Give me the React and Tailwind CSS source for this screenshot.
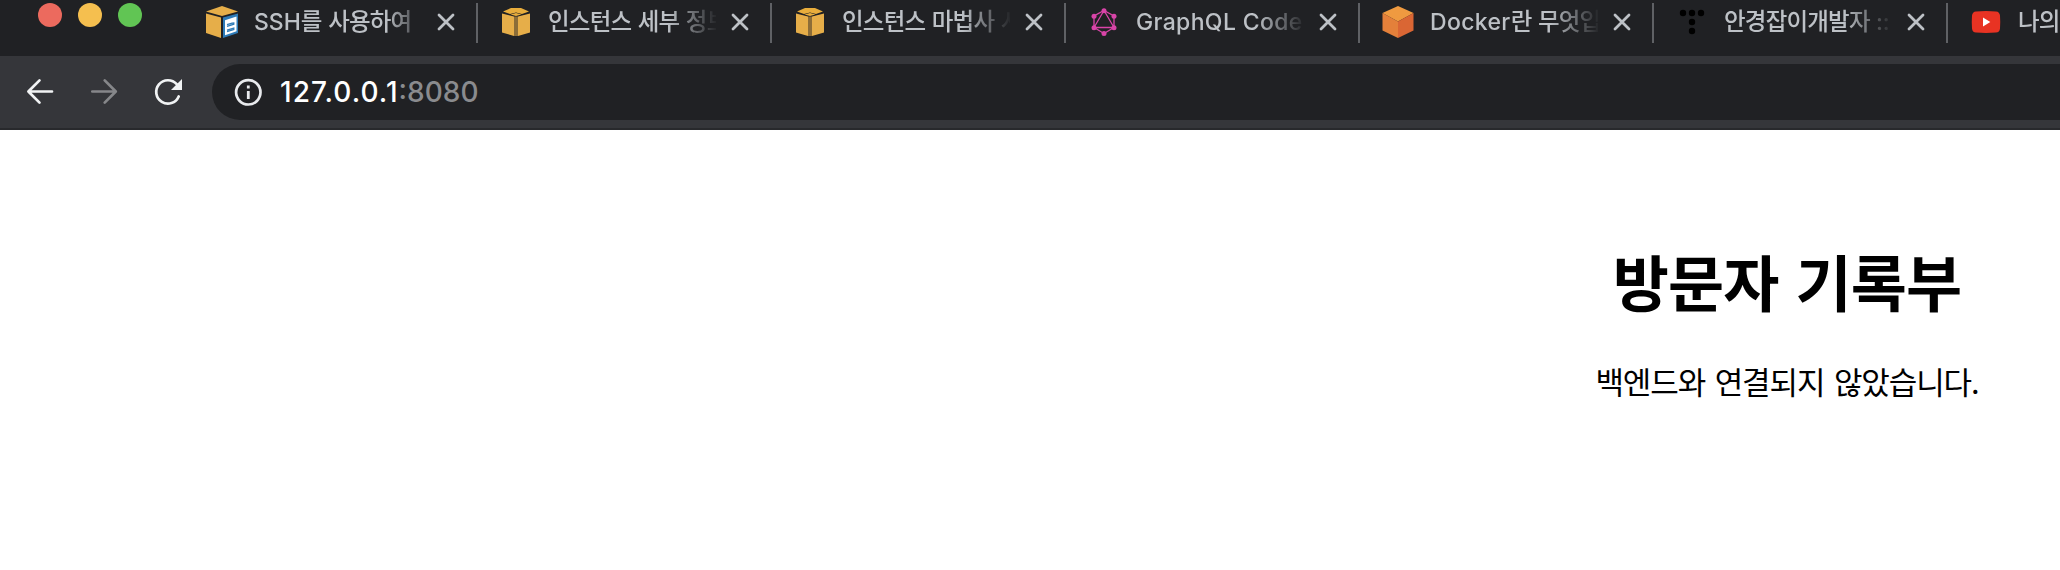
import React from "react";

const GRAY = "#bdc1c6";

function AwsDocIcon() {
  return (
    <svg viewBox="0 0 32 32" className="size-8">
      <path d="M0 5.500 16 0l16 5.500-16 4.500z" fill="#e6ae49" />
      <path d="M0 7.500 15 11.500V32L0 27z" fill="#e6ae49" />
      <path d="M17 11.500 32 7.500V27L17 32z" fill="#2f7cb8" />
      <path d="M19 14.200 30.500 10.500v14.800L19 29.200z" fill="#fff" />
      <path d="M21 18.600l5-1.500 1.800-.1v1.200L21 20.400M21 24.200l6.800-2v1.400L21 25.600" fill="none" stroke="#2f7cb8" strokeWidth="1.300" />
    </svg>
  );
}

function AwsBoxIcon() {
  return (
    <svg viewBox="0 0 32 32" className="size-8">
      <path d="M3 5.500 11 2h10l8 3.500-7 2.500-6-1.500-6 1.500z" fill="#e8ad3c" />
      <path d="M10.500 8.500 16 7l5.500 1.500L16 10z" fill="#e8ad3c" />
      <path d="M2 7.500l12 3v19.500L2 26.500z" fill="#e6ae49" />
      <path d="M30 7.500 18 10.500v19.500l12-3.500z" fill="#e6ae49" />
      <path d="M14 10.500h4V30h-4z" fill="#8c6d38" />
    </svg>
  );
}

function GraphqlIcon() {
  return (
    <svg viewBox="0 0 32 32" className="size-8" fill="#d944a8">
      <path d="M16 4.500 26 10v11.500L16 27.500 6 21.500V10zM16 4.500 6 21.500h20z" fill="none" stroke="#d944a8" strokeWidth="1.300" />
      <circle cx="16" cy="4.700" r="2.500" />
      <circle cx="26" cy="10.300" r="2.500" />
      <circle cx="26" cy="21.700" r="2.500" />
      <circle cx="16" cy="27.400" r="2.500" />
      <circle cx="6" cy="21.700" r="2.500" />
      <circle cx="6" cy="10.300" r="2.500" />
    </svg>
  );
}

function CubeIcon() {
  return (
    <svg viewBox="0 0 32 32" className="size-8">
      <path d="M16 0 31.500 7 16 15.500.5 7z" fill="#ef9a40" />
      <path d="M.5 7 16 15.500V32L.5 24.500z" fill="#e4803a" />
      <path d="M31.500 7 16 15.500V32l15.500-7.500z" fill="#da6634" />
    </svg>
  );
}

function DotsIcon() {
  return (
    <svg viewBox="0 0 32 32" className="size-8" fill="#000">
      <circle cx="7" cy="7" r="3.200" />
      <circle cx="16" cy="7" r="3.200" />
      <circle cx="25" cy="7" r="3.200" />
      <circle cx="16" cy="16" r="3.200" />
      <circle cx="16" cy="25" r="3.200" />
    </svg>
  );
}

function YoutubeIcon() {
  return (
    <svg viewBox="0 0 32 32" className="size-8">
      <path d="M6 5.400Q16 4.600 26 5.400 29.600 5.600 30 9.500q.5 6.500 0 13-.4 3.900-4 4.100-10 .8-20 0-3.600-.2-4-4.100-.5-6.500 0-13Q2.400 5.600 6 5.400z" fill="#e83323" />
      <path d="M13 11.500 20.300 16 13 20.500z" fill="#fff" />
    </svg>
  );
}

function Ko({ children }) {
  return <span className="text-[23.5px] tracking-[-0.8px] [word-spacing:1px]">{children}</span>;
}

const wideFade = "[mask-image:linear-gradient(to_right,#000_132px,transparent_172px)]";
const fade = "[mask-image:linear-gradient(to_right,#000_120px,transparent_170px)]";

const tabs = [
  { icon: <AwsDocIcon />, title: <>SSH<Ko>를 사용하여</Ko></>, mask: wideFade },
  { icon: <AwsBoxIcon />, title: <Ko>인스턴스 세부 정보</Ko>, mask: fade },
  { icon: <AwsBoxIcon />, title: <Ko>인스턴스 마법사 시</Ko>, mask: fade },
  { icon: <GraphqlIcon />, title: <span className="tracking-[0.35px]">GraphQL Code</span>, mask: fade },
  { icon: <CubeIcon />, title: <><span className="tracking-[0.35px]">Docker</span><Ko>란 무엇입</Ko></>, mask: fade },
  { icon: <DotsIcon />, title: <><Ko>안경잡이개발자</Ko> ::</>, mask: fade },
  { icon: <YoutubeIcon />, title: <Ko>나의</Ko>, mask: fade },
];

function Tab({ icon, title, mask }) {
  return (
    <div className="flex h-11 w-[294px] shrink-0 items-center pl-[22px]">
      {icon}
      <div className={`ml-4 w-[168px] overflow-hidden whitespace-nowrap text-[23px] leading-[36px] font-medium text-[#bdc1c6] ${mask}`}>
        {title}
      </div>
      <svg viewBox="0 0 32 32" className="ml-2 size-8">
        <path d="M9 9l14 14M23 9 9 23" stroke={GRAY} strokeWidth="2.800" strokeLinecap="round" />
      </svg>
      <div className="mt-[2px] ml-[14px] h-10 w-0.5 bg-[#5f6165]" />
    </div>
  );
}

function TabStrip() {
  return (
    <div className="flex h-14 items-start overflow-hidden bg-[#202124]">
      <div className="flex w-[184px] shrink-0 gap-4 pt-[3px] pl-[38px]">
        <div className="size-6 rounded-full bg-[#ec6a5e]" />
        <div className="size-6 rounded-full bg-[#f5bf4f]" />
        <div className="size-6 rounded-full bg-[#61c554]" />
      </div>
      {tabs.map((tab, i) => (
        <Tab key={i} {...tab} />
      ))}
    </div>
  );
}

function Toolbar() {
  return (
    <div className="flex h-[74px] items-center overflow-hidden border-b-2 border-[#28292c] bg-[#35363a]">
      <div className="flex w-[212px] shrink-0 gap-8 pl-6">
        <svg viewBox="0 0 32 32" className="size-8" fill="none" stroke="#f1f3f4" strokeWidth="2.700" strokeLinecap="round" strokeLinejoin="round">
          <path d="M28 15.500H4.500M15.500 4.400 4.400 15.500l11.100 11.100" />
        </svg>
        <svg viewBox="0 0 32 32" className="size-8" fill="none" stroke="#86878a" strokeWidth="2.700" strokeLinecap="round" strokeLinejoin="round">
          <path d="M4.300 15.500H27.500M16.700 4.400 27.800 15.500l-11.100 11.100" />
        </svg>
        <svg viewBox="0 0 32 32" className="size-8">
          <path d="M26.700 20.500A11.700 11.700 0 1 1 24.700 8.200" fill="none" stroke="#f1f3f4" strokeWidth="2.700" strokeLinecap="round" />
          <path d="M30 3v11H19z" fill="#f1f3f4" />
        </svg>
      </div>
      <div className="flex h-14 flex-1 items-center rounded-l-full bg-[#202124] pl-5">
        <svg viewBox="0 0 32 32" className="size-8" fill="none" stroke="#e8eaed">
          <circle cx="16.300" cy="16.300" r="12.200" strokeWidth="2.700" />
          <path d="M16.300 15v8M16.300 9.500v3" strokeWidth="2.800" />
        </svg>
        <div className="ml-4 text-[28px] leading-9 font-medium whitespace-nowrap text-white">
          <span className="tracking-[1.05px]">127.0.0.1</span>
          <span className="text-[#8a8b8e]">:8080</span>
        </div>
      </div>
    </div>
  );
}

export default function App() {
  return (
    <div className="h-[570px] w-full overflow-hidden bg-white font-['Inter','Noto_Sans_CJK_KR',sans-serif]">
      <TabStrip />
      <Toolbar />
      <main className="w-[3574px] pt-[106px] text-center font-['Noto_Sans_CJK_KR',sans-serif] text-black">
        <h1 className="text-[61px] leading-[90px] font-bold tracking-[-0.9px] [word-spacing:4px]">방문자 기록부</h1>
        <p className="mt-[31px] text-[31px] leading-[48px] tracking-[-1.1px] [word-spacing:3.7px]">백엔드와 연결되지 않았습니다.</p>
      </main>
    </div>
  );
}
